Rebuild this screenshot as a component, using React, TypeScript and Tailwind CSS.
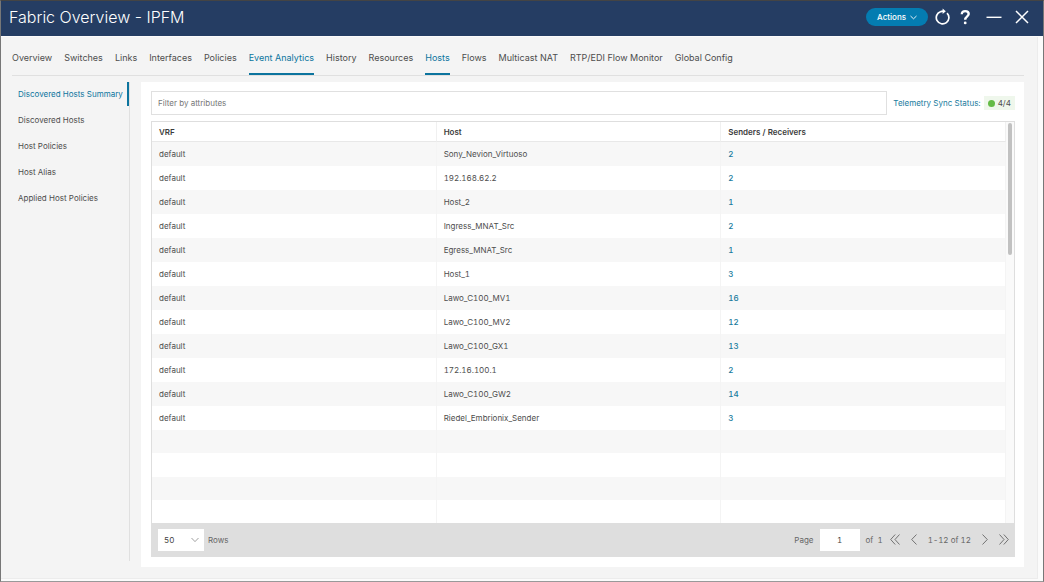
import type { ReactNode } from 'react';

const tabs = [
  'Overview', 'Switches', 'Links', 'Interfaces', 'Policies', 'Event Analytics', 'History',
  'Resources', 'Hosts', 'Flows', 'Multicast NAT', 'RTP/EDI Flow Monitor', 'Global Config',
];
const activeTabs = ['Event Analytics', 'Hosts'];

const sections = [
  'Discovered Hosts Summary', 'Discovered Hosts', 'Host Policies', 'Host Alias', 'Applied Host Policies',
];

const hosts: [string, number][] = [
  ['Sony_Nevion_Virtuoso', 2],
  ['192.168.62.2', 2],
  ['Host_2', 1],
  ['Ingress_MNAT_Src', 2],
  ['Egress_MNAT_Src', 1],
  ['Host_1', 3],
  ['Lawo_C100_MV1', 16],
  ['Lawo_C100_MV2', 12],
  ['Lawo_C100_GX1', 13],
  ['172.16.100.1', 2],
  ['Lawo_C100_GW2', 14],
  ['Riedel_Embrionix_Sender', 3],
];
const blankRows = [0, 1, 2, 3];

function IconButton({ label, children }: { label: string; children: ReactNode }) {
  return (
    <button type="button" aria-label={label} className="flex shrink-0 items-center justify-center">
      {children}
    </button>
  );
}

function Header() {
  return (
    <header className="flex h-[35px] shrink-0 items-center justify-between bg-[#253d63] pr-[14px] pb-[3px] pl-2 text-white">
      <h1 className="text-base font-light">Fabric Overview - IPFM</h1>
      <div className="flex items-center">
        <button type="button" className="flex h-[18px] items-center gap-1 rounded-full bg-[#047cb1] px-[11px] text-[8px] font-medium">
          Actions
          <svg width="7" height="5" viewBox="0 0 7 5" fill="none" stroke="currentColor" strokeWidth="0.9">
            <path d="M0.5 1 3.5 3.8 6.5 1" />
          </svg>
        </button>
        <div className="ml-[7px] flex items-center gap-2">
          <IconButton label="Refresh">
            <svg width="15" height="18" viewBox="0 0 15 18" fill="none" stroke="currentColor" strokeWidth="1.7">
              <path d="M12 5.100A6.300 6.300 0 1 1 5.400 3.700Q6.400 3.200 8.500 3.200" />
              <path d="M7.600 0.600 10.800 3.300 7.600 6Z" fill="currentColor" stroke="none" />
            </svg>
          </IconButton>
          <IconButton label="Help">
            <svg width="14" height="16" viewBox="0 0 14 16" fill="none" stroke="currentColor" strokeWidth="2.400">
              <path d="M3.8 5.2C3.8 3 5 2.100 7.200 2.100s3.500 1.200 3.500 3C10.700 7.400 7.200 7.400 7.200 10.800" />
              <circle cx="7.2" cy="13.9" r="1.4" fill="currentColor" stroke="none" />
            </svg>
          </IconButton>
        </div>
        <div className="ml-[14px] flex items-center gap-[13px]">
          <IconButton label="Minimize">
            <svg width="16" height="14" viewBox="0 0 16 14" stroke="currentColor" strokeWidth="1.4">
              <path d="M0.500 7.300h15" />
            </svg>
          </IconButton>
          <IconButton label="Close">
            <svg width="14" height="14" viewBox="0 0 14 14" stroke="currentColor" strokeWidth="1.5">
              <path d="m1 1 12 12M13 1 1 13" />
            </svg>
          </IconButton>
        </div>
      </div>
    </header>
  );
}

function HostsTable() {
  const cell = 'border-r border-[#f4f4f4] px-[7px]';
  return (
    <table className="w-full table-fixed border-separate border-spacing-0 text-left text-[8px] leading-3 tabular-nums">
      <thead>
        <tr className="h-5 text-[#3c3c3c]">
          {['VRF', 'Host', 'Senders / Receivers'].map((name) => (
            <th key={name} scope="col" className="border-r border-b border-r-[#f0f0f0] border-b-[#e8e8e8] px-[7px] font-semibold">{name}</th>
          ))}
        </tr>
      </thead>
      <tbody>
        {hosts.map(([host, count]) => (
          <tr key={host} className="h-6 odd:bg-[#f7f7f7]">
            <td className={cell}>default</td>
            <td className={cell}>{host}</td>
            <td className={cell}>
              <a href="#host" className="font-medium text-[#187b9d]">{count}</a>
            </td>
          </tr>
        ))}
        {blankRows.map((row) => (
          <tr key={row} className="odd:bg-[#f7f7f7]">
            <td className={cell}>&nbsp;</td>
            <td className={cell} />
            <td className={cell} />
          </tr>
        ))}
      </tbody>
    </table>
  );
}

function Chevrons({ d, label, wide }: { d: string; label: string; wide?: boolean }) {
  return (
    <IconButton label={label}>
      <svg width={wide ? 10 : 6} height="11" viewBox={wide ? '0 0 10 11' : '0 0 6 11'} fill="none" stroke="#666" strokeWidth="0.9">
        <path d={d} />
      </svg>
    </IconButton>
  );
}

function Pagination() {
  return (
    <footer className="flex h-[33px] shrink-0 items-center justify-between bg-[#dedede] pr-[5px] pl-[6px] text-[8px] text-[#666] tabular-nums">
      <div className="flex items-center gap-1">
        <div className="relative">
          <select id="page-size" defaultValue="50" className="h-[22px] w-[46px] appearance-none bg-white pl-[6px] text-[#444]">
            <option>50</option>
          </select>
          <svg className="pointer-events-none absolute top-2 right-[5px]" width="8" height="6" viewBox="0 0 8 6" fill="none" stroke="#888" strokeWidth="0.8">
            <path d="M0.500 1 4 4.600 7.500 1" />
          </svg>
        </div>
        <label htmlFor="page-size">Rows</label>
      </div>
      <div className="flex items-center">
        <label htmlFor="page-number">Page</label>
        <input id="page-number" defaultValue="1" className="mx-[6px] h-[22px] w-10 bg-white text-center text-[#444]" />
        <span>of&nbsp; 1</span>
        <div className="ml-[7px] flex items-center gap-[11px]">
          <Chevrons wide label="First page" d="M5.200 0.500 0.700 5.500 5.200 10.500M9.500 0.500 5 5.500 9.500 10.500" />
          <Chevrons label="Previous page" d="M5.500 0.500 0.700 5.500 5.500 10.500" />
          <span>1-12 of 12</span>
          <Chevrons label="Next page" d="M0.500 0.500 5.300 5.500 0.500 10.500" />
          <Chevrons wide label="Last page" d="M0.500 0.500 5 5.500 0.500 10.500M4.800 0.500 9.300 5.500 4.800 10.500" />
        </div>
      </div>
    </footer>
  );
}

export default function App() {
  return (
    <div className="flex min-h-screen flex-col border border-t-[#444] border-r-[#777] border-b-[#999] border-l-[#777] bg-[#fbfbfb] font-['Inter','Liberation_Sans',sans-serif] text-[#4d4d4d]">
      <Header />
      <div className="mt-px mr-[5px] mb-[2px] flex grow flex-col border-r border-b border-[#ececec] bg-[#f4f4f4] pr-[13px] pb-[11px] pl-[11px]">
        <nav className="flex h-[39px] shrink-0 items-end gap-3 border-b border-[#e0e0e0] text-[9px] whitespace-nowrap">
          {tabs.map((tab) => (
            <a
              key={tab}
              href="#tab"
              className={
                activeTabs.includes(tab)
                  ? 'flex h-[25px] items-start border-b-2 border-[#0c749e] pt-[2px] leading-3 text-[#0c749e]'
                  : 'flex h-[25px] items-start border-b-2 border-transparent pt-[2px] leading-3'
              }
            >
              {tab}
            </a>
          ))}
        </nav>
        <div className="mt-[6px] flex grow">
          <aside className="mr-[11px] mb-[6px] w-[118px] shrink-0 border-r border-[#e0e0e0]">
            <ul className="flex flex-col gap-[2px] text-[8px] whitespace-nowrap">
              {sections.map((section, i) => (
                <li key={section}>
                  <a
                    href="#section"
                    className={
                      i === 0
                        ? 'flex h-6 items-center border-r-2 border-[#0c749e] pl-[6px] text-[#0c749e]'
                        : 'flex h-6 items-center pl-[6px]'
                    }
                  >
                    {section}
                  </a>
                </li>
              ))}
            </ul>
          </aside>
          <main className="flex min-w-0 grow flex-col bg-white pt-[9px] pr-[9px] pb-[10px] pl-[10px]">
            <div className="flex items-center">
              <input
                aria-label="Filter by attributes"
                placeholder="Filter by attributes"
                className="h-6 min-w-0 grow border border-[#e0e0e0] px-[6px] text-[8px] placeholder:text-[#777]"
              />
              <a href="#telemetry" className="ml-[6px] text-[8px] text-[#187b9d]">Telemetry Sync Status:</a>
              <span className="ml-[3px] flex h-[14px] items-center gap-[3px] bg-[#eff7ec] px-1 text-[8px] tabular-nums">
                <span className="size-[7px] rounded-full bg-[#64bb46]" />
                4/4
              </span>
            </div>
            <section className="mt-[6px] flex grow flex-col border border-[#dedede]">
              <div className="flex grow">
                <div className="grid min-w-0 grow">
                  <HostsTable />
                </div>
                <div className="w-2 shrink-0 bg-[#fafafa] px-[2px] pt-px">
                  <div className="h-[132px] rounded-full bg-[#c1c1c1]" />
                </div>
              </div>
              <Pagination />
            </section>
          </main>
        </div>
      </div>
    </div>
  );
}
